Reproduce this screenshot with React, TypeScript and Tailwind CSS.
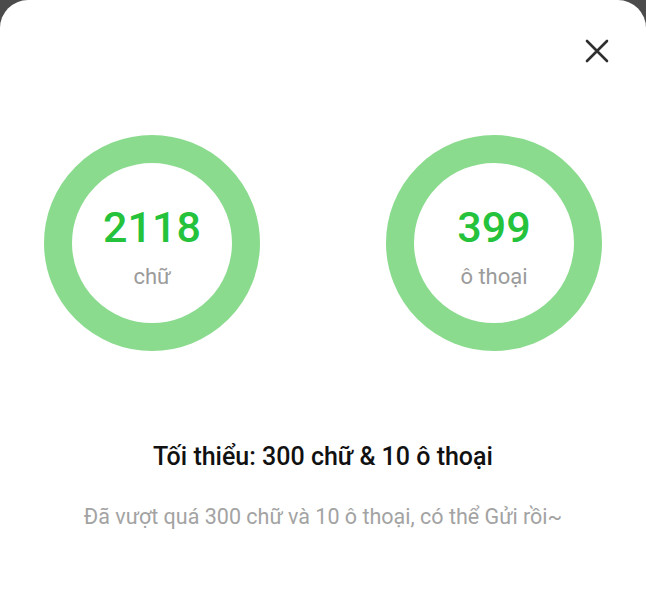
import React from "react";

const Ring = ({ value, label }: { value: string; label: string }) => (
  <div className="w-[216px] h-[216px] rounded-full border-[28px] border-[#8adb8e] flex flex-col items-center justify-center">
    <div className="text-[43px] leading-[48px] font-medium text-[#25c23c] mt-[8px]">
      {value}
    </div>
    <div className="text-[22px] leading-[28px] text-[#9b9b9b] mt-[12px]">
      {label}
    </div>
  </div>
);

export default function App() {
  return (
    <div
      className="w-[646px] h-[600px] bg-[#4b4b4b] overflow-hidden"
      style={{ fontFamily: "Roboto, 'Noto Sans', sans-serif" }}
    >
      <div className="h-full bg-white rounded-t-[28px] flex flex-col">
        {/* header */}
        <div className="flex justify-end pt-[39px] pr-[37px]">
          <button className="w-[24px] h-[24px] text-[#2f2f2f]">
            <svg viewBox="0 0 24 24" width="24" height="24" fill="none" stroke="currentColor" strokeWidth="2.6" strokeLinecap="round">
              <path d="M2 2L22 22M22 2L2 22" />
            </svg>
          </button>
        </div>

        {/* rings */}
        <div className="flex justify-between px-[44px] mt-[72px]">
          <Ring value="2118" label="chữ" />
          <Ring value="399" label="ô thoại" />
        </div>

        {/* text */}
        <div className="mt-[90px] text-center text-[25px] leading-[32px] font-medium text-[#111]">
          Tối thiểu: 300 chữ &amp; 10 ô thoại
        </div>
        <div className="mt-[30px] text-center text-[21.5px] leading-[28px] text-[#a3a3a3]">
          Đã vượt quá 300 chữ và 10 ô thoại, có thể Gửi rồi~
        </div>
      </div>
    </div>
  );
}
